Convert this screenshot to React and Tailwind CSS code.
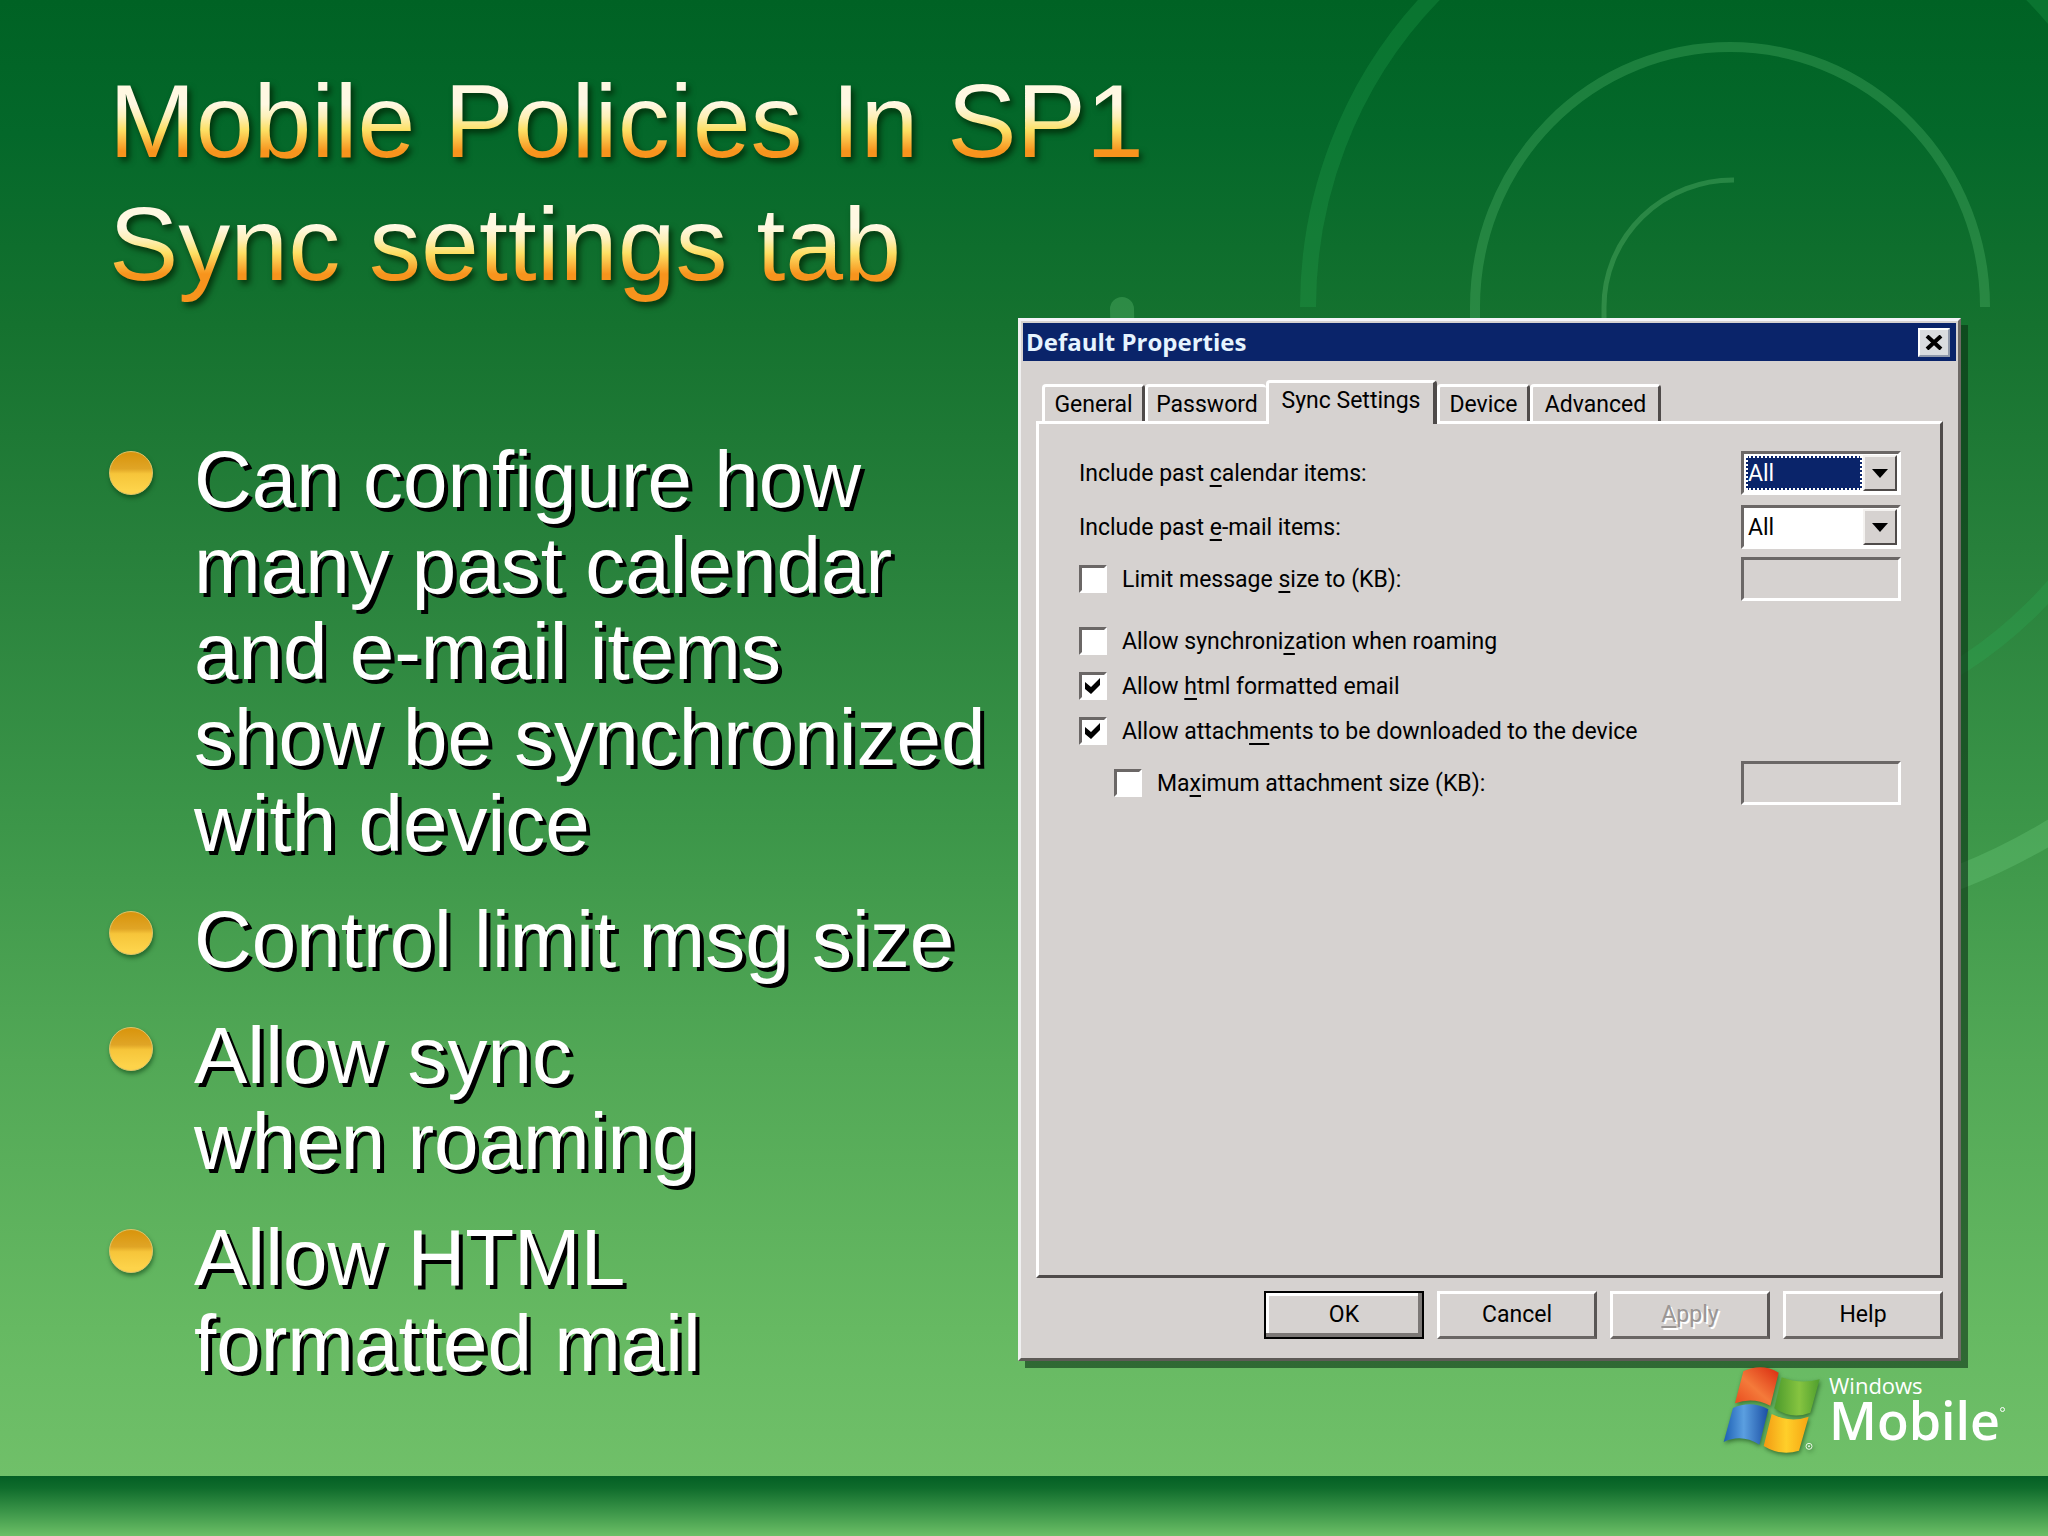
import React from "react";

const SANS = "font-['Liberation_Sans',Arial,sans-serif]";
const RAISED =
  "border-[3px] border-t-white border-l-white border-b-[#6a6664] border-r-[#5a5655] bg-[#d6d2d0]";
const SUNKEN =
  "border-[3px] border-t-[#6b6766] border-l-[#6b6766] border-b-white border-r-white";

function Rings() {
  return (
    <svg
      aria-hidden="true"
      className="pointer-events-none absolute top-0 right-0"
      width="1048"
      height="1000"
      viewBox="1000 0 1048 1000"
      fill="none"
    >
      <path d="M1122 309A612 612 0 1 0 2346 307" stroke="#7ddc8a" strokeOpacity="0.25" strokeWidth="24" strokeLinecap="round" />
      <path d="M1308 307A425 440 0 0 1 2158 307A425 425 0 0 1 1733 732" stroke="#2fb85c" strokeOpacity="0.22" strokeWidth="16" />
      <path d="M1475 330V307A255 260 0 0 1 1985 307" stroke="#63c679" strokeOpacity="0.27" strokeWidth="10" />
      <path d="M1604 330V307A129 127 0 0 1 1734 180" stroke="#7fd488" strokeOpacity="0.27" strokeWidth="5" />
    </svg>
  );
}

function TitleLine({ children }) {
  return (
    <span className="block bg-[linear-gradient(#fff8e2_36%,#fdf0b8_46%,#fde064_57%,#f7941d_74%)] bg-clip-text text-transparent">
      {children}
    </span>
  );
}

function Bullet({ children }) {
  return (
    <li className="flex items-start gap-[41px]">
      <span className="mt-[14px] size-11 shrink-0 rounded-full border border-[#e3c265] bg-[linear-gradient(#d9960f_5%,#e0a526_40%,#f6c53a_52%,#fdd34a_90%)] shadow-[1px_3px_4px_rgba(0,50,10,0.5)]" />
      <span>{children}</span>
    </li>
  );
}

function Tab({ children, className }) {
  return (
    <button
      type="button"
      role="tab"
      aria-selected="false"
      className={
        "h-[37px] rounded-t-[4px] border-t-[3px] border-l-[3px] border-t-white border-l-white pt-[2px] text-center " +
        className
      }
    >
      {children}
    </button>
  );
}

function Check({ id, checked, children, className = "" }) {
  return (
    <div className={"flex items-center gap-[15px] " + className}>
      <span className="grid size-7">
        <input
          id={id}
          type="checkbox"
          defaultChecked={checked}
          className={"peer col-start-1 row-start-1 size-7 appearance-none bg-white " + SUNKEN}
        />
        <svg
          viewBox="0 0 28 28"
          className="pointer-events-none invisible col-start-1 row-start-1 size-7 peer-checked:visible"
        >
          <path d="M6 10L12 15L21 6V13L12 22L6 17Z" fill="#000" />
        </svg>
      </span>
      <label htmlFor={id} className="pt-[2px]">{children}</label>
    </div>
  );
}

function Combo({ id, active }) {
  return (
    <div className={"flex h-11 w-40 bg-white p-px " + SUNKEN}>
      <select
        id={id}
        className={
          "min-w-0 flex-1 appearance-none leading-none outline-none " +
          (active
            ? "m-px border-2 border-dotted border-white bg-[#0a246a] text-white"
            : "m-px border-2 border-white bg-white text-black")
        }
      >
        <option>All</option>
      </select>
      <span
        aria-hidden="true"
        className="pointer-events-none grid w-[34px] place-items-center border-2 border-t-[#f4f2f0] border-r-[#4f4b4a] border-b-[#4f4b4a] border-l-[#f4f2f0] bg-[#d6d2d0]"
      >
        <svg width="16" height="9" viewBox="0 0 16 9">
          <path d="M0 0H16L8 9Z" fill="#000" />
        </svg>
      </span>
    </div>
  );
}

function PushButton({ children, className = RAISED, disabled }) {
  return (
    <button type="button" disabled={disabled} className={"h-12 w-40 " + className}>
      {children}
    </button>
  );
}

function Dialog() {
  return (
    <section
      role="dialog"
      aria-labelledby="dialog-title"
      className="flex flex-col border-[3px] border-t-[#f3f3f8] border-r-[#6f6a66] border-b-[#5d5a56] border-l-[#f0f0f0] bg-[#d6d2d0] font-[Roboto,'Liberation_Sans',sans-serif] text-[23px] leading-[28px] text-black shadow-[7px_7px_0_rgba(10,50,20,0.6)]"
    >
      <header className="mx-[2px] mt-[2px] flex h-[38px] items-center justify-between bg-[#0a246a] pr-[6px] pl-[3px]">
        <h2
          id="dialog-title"
          className="font-['Open_Sans','Noto_Sans',sans-serif] text-[24px] font-bold text-[#e6f4ff]"
        >
          Default Properties
        </h2>
        <button
          type="button"
          aria-label="Close"
          className="grid h-[29px] w-8 place-items-center border-2 border-t-white border-r-[#8f99ab] border-b-[#8f99ab] border-l-white bg-[#d9dcdf]"
        >
          <svg width="18" height="15" viewBox="0 0 18 15">
            <path d="M2 1L16 14M16 1L2 14" stroke="#000" strokeWidth="4" />
          </svg>
        </button>
      </header>

      <div className="flex flex-1 flex-col pt-[19px] pr-[15px] pb-[19px] pl-[15px]">
        <div role="tablist" className="flex h-[41px] items-end pl-[6px]">
          <Tab className="w-[103px] border-r-[3px] border-r-[#4f4b4a]">General</Tab>
          <Tab className="w-[121px]">Password</Tab>
          <button
            type="button"
            role="tab"
            aria-selected="true"
            className="relative -mb-[3px] h-11 w-[171px] rounded-t-[4px] border-t-[3px] border-r-4 border-l-[3px] border-t-white border-r-[#4f4b4a] border-l-white bg-[#d6d2d0] pb-[5px]"
          >
            Sync Settings
          </button>
          <Tab className="w-[93px] border-l-0 border-r-[3px] border-r-[#4f4b4a]">Device</Tab>
          <Tab className="w-[131px] border-r-[3px] border-r-[#4f4b4a]">Advanced</Tab>
        </div>

        <div
          role="tabpanel"
          className="flex-1 border-[3px] border-t-white border-r-[#4f4b4a] border-b-[#4f4b4a] border-l-white pt-[27px] pr-[39px] pl-[40px]"
        >
          <div className="flex h-11 items-center justify-between">
            <label htmlFor="cal" className="pt-[2px]">
              Include past <u className="underline-offset-4">c</u>alendar items:
            </label>
            <Combo id="cal" active />
          </div>
          <div className="mt-[10px] flex h-11 items-center justify-between">
            <label htmlFor="mail" className="pt-[2px]">
              Include past <u className="underline-offset-4">e</u>-mail items:
            </label>
            <Combo id="mail" />
          </div>
          <div className="mt-2 flex h-11 items-center justify-between">
            <Check id="limit">
              Limit message <u className="underline-offset-4">s</u>ize to (KB):
            </Check>
            <input aria-label="Message size limit in KB" disabled className={"h-11 w-40 px-2 " + SUNKEN} />
          </div>
          <Check id="roam" className="mt-[25px]">
            Allow synchroni<u className="underline-offset-4">z</u>ation when roaming
          </Check>
          <Check id="html" checked className="mt-[15px]">
            Allow <u className="underline-offset-4">h</u>tml formatted email
          </Check>
          <Check id="attach" checked className="mt-[15px]">
            Allow attach<u className="underline-offset-4">m</u>ents to be downloaded to the device
          </Check>
          <div className="mt-[15px] flex h-11 items-center justify-between pl-[35px]">
            <Check id="max">
              Ma<u className="underline-offset-4">x</u>imum attachment size (KB):
            </Check>
            <input aria-label="Maximum attachment size in KB" disabled className={"h-11 w-40 px-2 " + SUNKEN} />
          </div>
        </div>

        <div className="mt-[13px] flex justify-end gap-[13px]">
          <PushButton className="border-2 border-black bg-[#d6d2d0] shadow-[inset_-4px_-4px_0_#7c7876,inset_3px_3px_0_#fff]">
            OK
          </PushButton>
          <PushButton>Cancel</PushButton>
          <PushButton disabled className={"text-[#9a9694] [text-shadow:2px_2px_0_#fff] " + RAISED}>
            <u className="underline-offset-4">A</u>pply
          </PushButton>
          <PushButton>Help</PushButton>
        </div>
      </div>
    </section>
  );
}

function WindowsMobileLogo() {
  return (
    <div className="flex items-start gap-2 font-['Open_Sans','Noto_Sans',sans-serif] text-white">
      <svg width="100" height="92" viewBox="100 75 300 276" aria-hidden="true" className="drop-shadow-[1px_2px_2px_rgba(0,40,0,0.5)]">
        <defs>
          <linearGradient id="fr" x1="0" y1="1" x2="1" y2="0">
            <stop offset="0" stopColor="#e8481c" />
            <stop offset="0.45" stopColor="#f47a3a" />
            <stop offset="1" stopColor="#d92a10" />
          </linearGradient>
          <linearGradient id="fg">
            <stop offset="0" stopColor="#4c9a2c" />
            <stop offset="0.55" stopColor="#86c440" />
            <stop offset="1" stopColor="#4f9f2e" />
          </linearGradient>
          <linearGradient id="fb">
            <stop offset="0" stopColor="#1c5fb4" />
            <stop offset="0.45" stopColor="#5b9fe0" />
            <stop offset="1" stopColor="#1b4fa4" />
          </linearGradient>
          <linearGradient id="fy">
            <stop offset="0" stopColor="#f29a12" />
            <stop offset="0.5" stopColor="#ffcf2a" />
            <stop offset="1" stopColor="#f5a512" />
          </linearGradient>
        </defs>
        <path d="M167 94Q222 68 273 98L248 197Q196 170 142 190Z" fill="url(#fr)" />
        <path d="M282 112Q338 134 396 118L368 218Q312 240 260 205Z" fill="url(#fg)" />
        <path d="M136 204Q190 180 242 208L215 314Q162 280 108 306Z" fill="url(#fb)" />
        <path d="M252 222Q308 250 363 230L334 332Q280 350 228 318Z" fill="url(#fy)" />
        <circle cx="364" cy="319" r="9" fill="none" stroke="#e9f7e6" strokeWidth="3" />
        <circle cx="364" cy="319" r="3" fill="#e9f7e6" />
      </svg>
      <div className="pt-[7px]">
        <div className="text-[22px] leading-[26px]">Windows</div>
        <div className="flex items-start">
          <span className="text-[52px] leading-[44px] font-semibold">Mobile</span>
          <span className="mt-[9px] size-[5px] rounded-full border border-white" />
        </div>
      </div>
    </div>
  );
}

export default function App() {
  return (
    <div className={"flex min-h-screen flex-col overflow-hidden " + SANS}>
      <main className="relative flex flex-1 flex-col bg-[linear-gradient(#006224_0%,#04682a_9%,#15722f_22%,#27803b_37%,#3c9649_56%,#52a856_72%,#66b962_90%,#70c069_100%)] pt-[60px] pr-[87px] pl-[109px]">
        <Rings />
        <h1 className="relative text-[104px] leading-[123px] drop-shadow-[3px_4px_3px_rgba(0,30,0,0.75)]">
          <TitleLine>Mobile Policies In SP1</TitleLine>
          <TitleLine>Sync settings tab</TitleLine>
        </h1>
        <div className="relative mt-3 grid flex-1 grid-cols-[909fr_943fr]">
          <ul className="-mb-12 flex flex-col gap-[30px] pt-[119px] text-[80px] leading-[86px] whitespace-nowrap text-white [text-shadow:4px_4px_0_#000]">
            <Bullet>
              Can configure how
              <br />
              many past calendar
              <br />
              and e-mail items
              <br />
              show be synchronized
              <br />
              with device
            </Bullet>
            <Bullet>Control limit msg size</Bullet>
            <Bullet>
              Allow sync
              <br />
              when roaming
            </Bullet>
            <Bullet>
              Allow HTML
              <br />
              formatted mail
            </Bullet>
          </ul>
          <Dialog />
        </div>
        <div className="relative -mr-[44px] flex h-[115px] justify-end pt-1">
          <WindowsMobileLogo />
        </div>
      </main>
      <footer className="h-[60px] bg-[linear-gradient(#045f24_0%,#0f6c2c_20%,#3c9649_60%,#6cbf66_100%)]" />
    </div>
  );
}
